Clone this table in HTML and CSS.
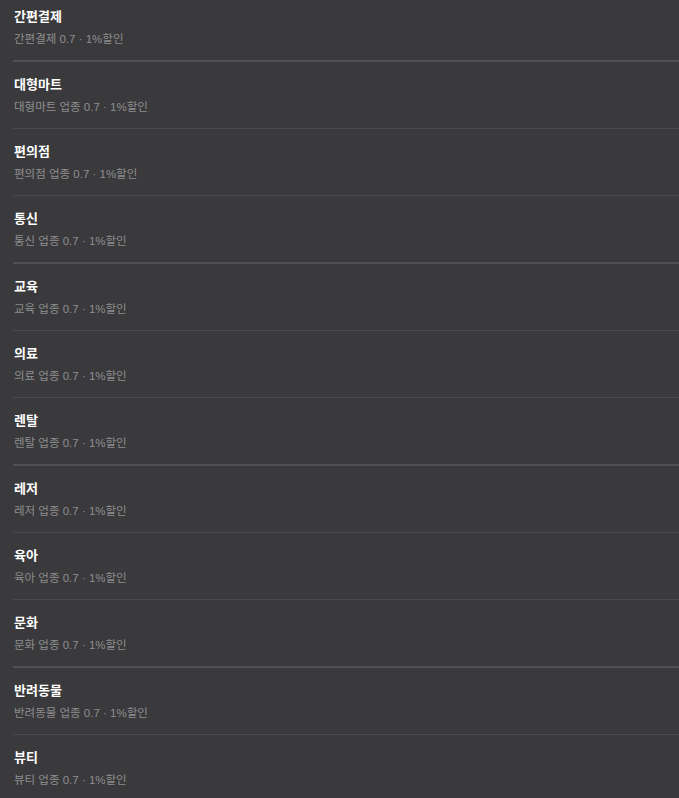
FILE: index.html
```html
<!DOCTYPE html>
<html lang="ko">
<head>
    <meta charset="UTF-8">
    <meta name="viewport" content="width=device-width, initial-scale=1.0">
    <title>업종 할인</title>
    <link rel="stylesheet" href="styles.css">
</head>
<body>
    <ul class="benefit-list">
        <li class="benefit-item group-end first">
            <h3>간편결제</h3>
            <p>간편결제 0.7 · 1%할인</p>
        </li>
        <li class="benefit-item">
            <h3>대형마트</h3>
            <p>대형마트 업종 0.7 · 1%할인</p>
        </li>
        <li class="benefit-item">
            <h3>편의점</h3>
            <p>편의점 업종 0.7 · 1%할인</p>
        </li>
        <li class="benefit-item group-end">
            <h3>통신</h3>
            <p>통신 업종 0.7 · 1%할인</p>
        </li>
        <li class="benefit-item">
            <h3>교육</h3>
            <p>교육 업종 0.7 · 1%할인</p>
        </li>
        <li class="benefit-item">
            <h3>의료</h3>
            <p>의료 업종 0.7 · 1%할인</p>
        </li>
        <li class="benefit-item group-end">
            <h3>렌탈</h3>
            <p>렌탈 업종 0.7 · 1%할인</p>
        </li>
        <li class="benefit-item">
            <h3>레저</h3>
            <p>레저 업종 0.7 · 1%할인</p>
        </li>
        <li class="benefit-item">
            <h3>육아</h3>
            <p>육아 업종 0.7 · 1%할인</p>
        </li>
        <li class="benefit-item group-end">
            <h3>문화</h3>
            <p>문화 업종 0.7 · 1%할인</p>
        </li>
        <li class="benefit-item">
            <h3>반려동물</h3>
            <p>반려동물 업종 0.7 · 1%할인</p>
        </li>
        <li class="benefit-item">
            <h3>뷰티</h3>
            <p>뷰티 업종 0.7 · 1%할인</p>
        </li>
    </ul>
</body>
</html>
```

FILE: styles.css
```css
body {
    font-family: "Liberation Sans", "Noto Sans CJK KR", sans-serif;
    background-color: #3a3a3c;
    color: #ffffff;
    margin: 0;
    padding: 0;
}

.benefit-list {
    list-style: none;
    margin: 0;
    padding: 0 0 0 13px;
}

.benefit-item {
    height: 66px;
    box-sizing: content-box;
    padding: 0 0 0 1px;
    border-bottom: 1px solid #4a4a4c;
}

.benefit-item.group-end {
    border-bottom: 2px solid #505052;
}

.benefit-item.first {
    height: 60px;
}

.benefit-item h3 {
    margin: 0;
    padding-top: 14px;
    font-size: 13px;
    line-height: 18px;
    font-weight: bold;
    color: #ffffff;
}

.benefit-item.first h3 {
    padding-top: 8px;
}

.benefit-item p {
    margin: 5px 0 0;
    font-size: 11.5px;
    line-height: 16px;
    color: #8e8e90;
}
```
